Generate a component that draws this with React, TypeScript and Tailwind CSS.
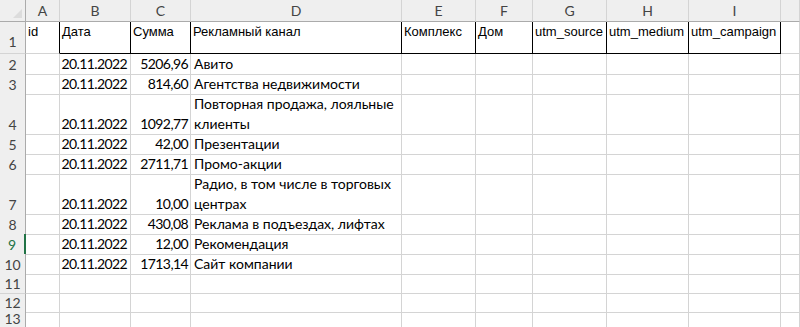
const cols = ["A", "B", "C", "D", "E", "F", "G", "H", "I", ""];

const headers = ["id", "Дата", "Сумма", "Рекламный канал", "Комплекс", "Дом", "utm_source", "utm_medium", "utm_campaign"];

type Row = { n: number; h: string; date?: string; sum?: string; channel?: string[] };

const rows: Row[] = [
  { n: 2, h: "h-[20px]", date: "20.11.2022", sum: "5206,96", channel: ["Авито"] },
  { n: 3, h: "h-[20px]", date: "20.11.2022", sum: "814,60", channel: ["Агентства недвижимости"] },
  { n: 4, h: "h-[40px]", date: "20.11.2022", sum: "1092,77", channel: ["Повторная продажа, лояльные", "клиенты"] },
  { n: 5, h: "h-[20px]", date: "20.11.2022", sum: "42,00", channel: ["Презентации"] },
  { n: 6, h: "h-[20px]", date: "20.11.2022", sum: "2711,71", channel: ["Промо-акции"] },
  { n: 7, h: "h-[40px]", date: "20.11.2022", sum: "10,00", channel: ["Радио, в том числе в торговых", "центрах"] },
  { n: 8, h: "h-[20px]", date: "20.11.2022", sum: "430,08", channel: ["Реклама в подъездах, лифтах"] },
  { n: 9, h: "h-[20px]", date: "20.11.2022", sum: "12,00", channel: ["Рекомендация"] },
  { n: 10, h: "h-[20px]", date: "20.11.2022", sum: "1713,14", channel: ["Сайт компании"] },
  { n: 11, h: "h-[20px]" },
  { n: 12, h: "h-[16px]" },
  { n: 13, h: "h-[16px]" },
];

const grid =
  "grid grid-cols-[26px_34px_71px_60px_211px_74px_57px_74px_82px_92px_1fr]";
const cell = "border-r border-b border-[#d4d4d4]";
const data = "font-['Lato',sans-serif] text-[14px] text-black leading-[20px]";
// digits in Lato run wider than the sheet's default face
const num = "tracking-[-0.6px]";

export default function App() {
  return (
    <div className="w-[800px] h-[327px] overflow-hidden bg-white select-none">
      {/* column letters */}
      <div className={`${grid} h-[22px] bg-[#efefef] font-['Lato',sans-serif] text-[14px] text-[#444]`}>
        <div className="relative border-r border-b border-[#ababab]">
          <div className="absolute right-[3px] bottom-[3px] w-0 h-0 border-l-[9px] border-l-transparent border-b-[9px] border-b-[#dcdcdc]" />
        </div>
        {cols.map((c, i) => (
          <div key={i} className="flex items-center justify-center border-r border-b border-[#ababab] border-r-[#d4d4d4]">
            {c}
          </div>
        ))}
      </div>

      {/* row 1: titles */}
      <div className={`${grid} h-[32px]`}>
        <div className="flex items-end justify-center pb-[1px] bg-[#efefef] border-r border-b border-[#ababab] border-b-[#d4d4d4] font-['Lato',sans-serif] text-[14px] text-[#444]">
          1
        </div>
        {headers.map((t, i) => (
          <div
            key={t}
            className={`px-[2px] pt-[2px] font-['Liberation_Sans',Arial,sans-serif] text-[13px] leading-[16px] text-black border-r border-b ${
              i === 0 ? "border-r-black border-b-[#d4d4d4]" : "border-black"
            }`}
          >
            {t}
          </div>
        ))}
        <div className={cell} />
      </div>

      {rows.map((r) => (
        <div key={r.n} className={`${grid} ${r.h}`}>
          <div
            className={`flex items-end justify-center bg-[#efefef] border-b border-[#d4d4d4] font-['Lato',sans-serif] text-[14px] leading-[18px] ${
              r.n === 9 ? "border-r-2 border-r-[#217346] text-[#217346]" : "border-r border-r-[#ababab] text-[#444]"
            }`}
          >
            {r.n}
          </div>
          <div className={cell} />
          <div className={`${cell} ${data} ${num} flex items-end justify-end pr-[3px]`}>{r.date}</div>
          <div className={`${cell} ${data} ${num} flex items-end justify-end pr-[2px]`}>{r.sum}</div>
          <div className={`${cell} ${data} flex flex-col justify-end pl-[3px]`}>
            {r.channel?.map((l) => (
              <span key={l}>{l}</span>
            ))}
          </div>
          <div className={cell} />
          <div className={cell} />
          <div className={cell} />
          <div className={cell} />
          <div className={cell} />
          <div className={cell} />
        </div>
      ))}
    </div>
  );
}
